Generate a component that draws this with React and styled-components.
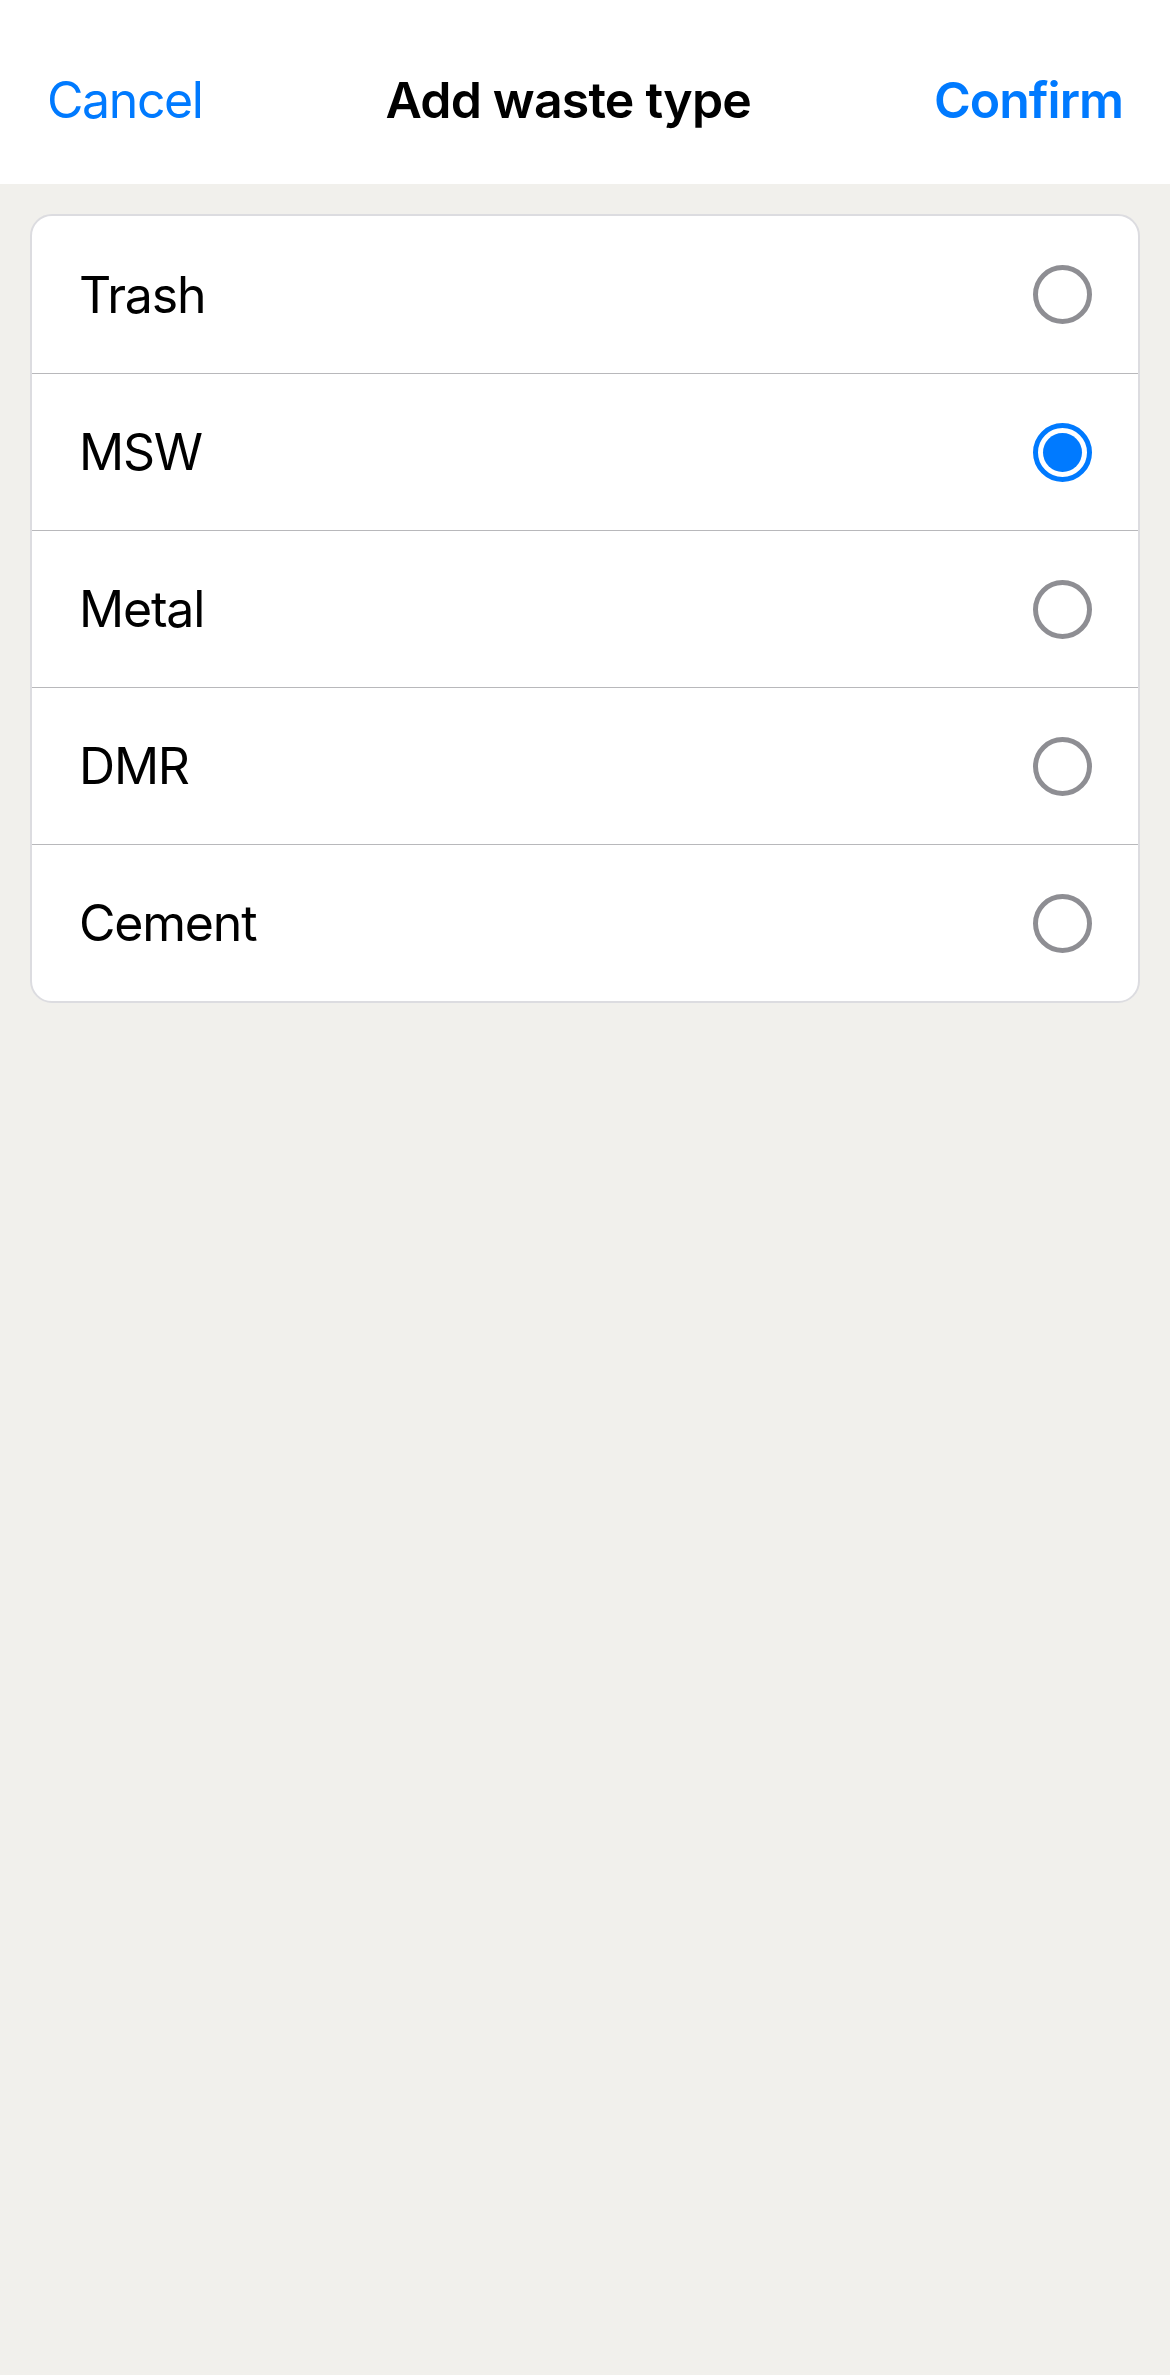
import React, { useState } from "react";
import styled, { createGlobalStyle } from "styled-components";

const GlobalStyle = createGlobalStyle`
  html, body {
    margin: 0;
    padding: 0;
    background-color: #f1f0ec;
  }
  body {
    font-family: Inter, "Liberation Sans", Arial, sans-serif;
    -webkit-font-smoothing: antialiased;
  }
`;

const Screen = styled.div`
  min-height: 100vh;
  background-color: #f1f0ec;
  display: flex;
  flex-direction: column;
`;

const NavBar = styled.div`
  height: 184px;
  box-sizing: border-box;
  padding: 72px 47px 0 47px;
  background-color: #ffffff;
  display: flex;
  flex-direction: row;
  align-items: flex-start;
`;

const NavButton = styled.button`
  outline: none;
  border: none;
  background: none;
  padding: 0;
  font-family: inherit;
  font-size: 50px;
  line-height: 57px;
  letter-spacing: ${(props) => (props.strong ? "-1px" : "-1.4px")};
  color: #007aff;
  font-weight: ${(props) => (props.strong ? 600 : 400)};
  cursor: pointer;
`;

const NavTitle = styled.div`
  flex: 1;
  text-align: center;
  font-size: 50px;
  line-height: 57px;
  letter-spacing: -0.8px;
  font-weight: 600;
  color: #000000;
`;

const Body = styled.div`
  padding: 30px 30px;
`;

const Card = styled.div`
  background-color: #ffffff;
  border: 2px solid #dcdce0;
  border-radius: 22px;
  overflow: hidden;
`;

const Row = styled.label`
  height: 157px;
  box-sizing: border-box;
  padding: 0 46px 0 47px;
  display: flex;
  flex-direction: row;
  align-items: center;
  justify-content: space-between;
  cursor: pointer;

  & + & {
    border-top: 1px solid #b8b8bb;
  }
`;

const RowText = styled.span`
  font-size: 50px;
  letter-spacing: -1.2px;
  color: #000000;
`;

const Radio = styled.span`
  width: 59px;
  height: 59px;
  box-sizing: border-box;
  border-radius: 50%;
  border: 5px solid ${(props) => (props.checked ? "#007aff" : "#8e8e93")};
  display: flex;
  align-items: center;
  justify-content: center;

  &::after {
    content: "";
    width: 39px;
    height: 39px;
    border-radius: 50%;
    background-color: #007aff;
    display: ${(props) => (props.checked ? "block" : "none")};
  }
`;

const wasteTypes = ["Trash", "MSW", "Metal", "DMR", "Cement"];

const App = () => {
  const [selected, setSelected] = useState("MSW");

  return (
    <>
      <GlobalStyle />
      <Screen>
        <NavBar>
          <NavButton>Cancel</NavButton>
          <NavTitle>Add waste type</NavTitle>
          <NavButton strong>Confirm</NavButton>
        </NavBar>
        <Body>
          <Card>
            {wasteTypes.map((type) => (
              <Row key={type} onClick={() => setSelected(type)}>
                <RowText>{type}</RowText>
                <Radio checked={selected === type} />
              </Row>
            ))}
          </Card>
        </Body>
      </Screen>
    </>
  );
};

export default App;
